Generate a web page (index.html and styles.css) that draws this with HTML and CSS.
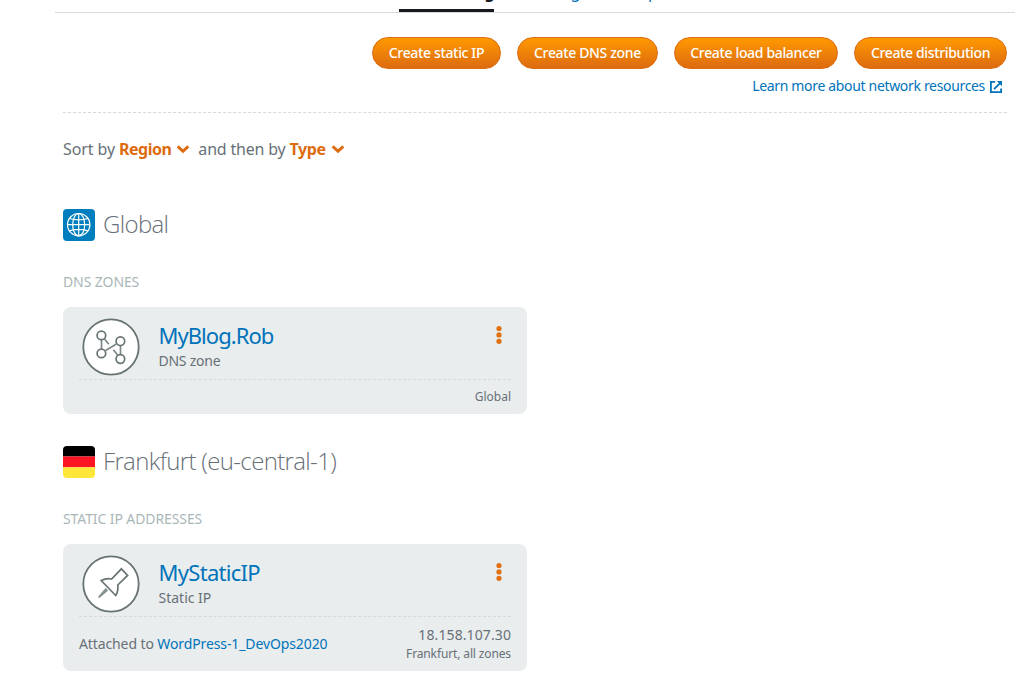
FILE: index.html
```html
<!DOCTYPE html>
<html lang="en">
<head>
<meta charset="utf-8">
<title>Networking</title>
<link rel="stylesheet" href="styles.css">
</head>
<body>
<div class="page">
  <nav class="tabs">
    <a class="tab tab-active"><span class="t-networking">Networking</span></a>
    <a class="tab"><span class="t-storage">Storage</span></a>
    <a class="tab tab-snapshots"><span class="t-snapshots">Snapshots</span></a>
  </nav>
  <main class="content">
    <header class="actions">
      <div class="buttons">
        <button class="btn b-ip">Create static IP</button>
        <button class="btn b-dns">Create DNS zone</button>
        <button class="btn b-lb">Create load balancer</button>
        <button class="btn b-dist">Create distribution</button>
      </div>
      <a class="learn"><span class="t-learn">Learn more about network resources</span>
        <svg width="14" height="14" viewBox="0 0 14 14" fill="none" stroke="currentColor" stroke-width="1.8"><path d="M6 1.9H1.9V12.1H12.1V8.5M5 9.2L11.4 2.8"/><path d="M7.8 1H13V6.2Z" fill="currentColor" stroke="none"/></svg>
      </a>
    </header>
    <div class="sort">
      <span class="t-sort">Sort by</span>
      <b class="t-region">Region</b>
      <svg class="chev chev-region" width="14" height="10" viewBox="0 0 14 10"><path d="M1.7 2.3L7 7.3L12.3 2.3"/></svg>
      <span class="t-then">and then by</span>
      <b class="t-type">Type</b>
      <svg class="chev" width="14" height="10" viewBox="0 0 14 10"><path d="M1.7 2.3L7 7.3L12.3 2.3"/></svg>
    </div>

    <section class="region">
      <div class="region-title">
        <svg width="32" height="32" viewBox="0 0 32 32" fill="none" stroke="#fff" stroke-width="1.2"><rect width="32" height="32" rx="4" fill="#007dbc" stroke="none"/><circle cx="15.7" cy="15.7" r="11.2"/><ellipse cx="15.7" cy="15.7" rx="6" ry="11.2"/><path d="M15.7 4.5V27M4.5 15.7H27M6.5 9.5Q15.7 12.4 24.9 9.5M6.5 21.9Q15.7 19 24.9 21.9"/></svg>
        <h2 class="t-global">Global</h2>
      </div>
      <h3 class="t-zones">DNS ZONES</h3>
      <article class="card">
        <div class="card-head">
          <svg class="badge" width="58" height="58" viewBox="0 0 58 58" fill="none" stroke="#687373" stroke-width="1.7"><circle cx="29" cy="29" r="27.7" fill="#fff" stroke-width="1.8"/><path d="M19.5 22V31M38.5 27.5V36.5M23.6 32.6L34.4 26M22.5 21L26.8 26.2M31.3 31.8L35.6 37" stroke="#7d8787"/><circle cx="19.4" cy="17.4" r="4.3"/><circle cx="19.4" cy="35.4" r="4.3"/><circle cx="38.4" cy="23.2" r="4.3"/><circle cx="38.4" cy="41" r="4.3"/></svg>
          <div class="card-name"><a class="name t-blog">MyBlog.Rob</a><span class="kind t-kind-dns">DNS zone</span></div>
          <svg class="dots" width="6" height="20" viewBox="0 0 6 20" fill="#e17012"><circle cx="3" cy="3.5" r="2.6"/><circle cx="3" cy="9.9" r="2.6"/><circle cx="3" cy="16.3" r="2.6"/></svg>
        </div>
        <div class="card-foot"><span class="where t-where-global">Global</span></div>
      </article>
    </section>

    <section class="region">
      <div class="region-title">
        <svg class="flag" width="32" height="32" viewBox="0 0 32 32"><path fill="#000" d="M0 0H32V10.5H0Z"/><path fill="#ff1423" d="M0 10.5H32V21.3H0Z"/><path fill="#ffe63b" d="M0 21.3H32V32H0Z"/></svg>
        <h2 class="t-frankfurt">Frankfurt (eu-central-1)</h2>
      </div>
      <h3 class="t-addresses">STATIC IP ADDRESSES</h3>
      <article class="card card-tall">
        <div class="card-head">
          <svg class="badge" width="58" height="58" viewBox="0 0 58 58" fill="none" stroke="#687373" stroke-width="1.7"><circle cx="29" cy="29" r="27.7" fill="#fff" stroke-width="1.8"/><path d="M39.4 13.8L45.6 20.4L35.8 30Q36.5 36 33.7 40.5L19.2 25.5Q24.5 22.8 29.6 24Z"/><path d="M23.7 33.3L25.8 35.4L18.3 42L16.5 42.6L17.2 40.8Z" fill="#879191" stroke="#879191" stroke-width=".7"/></svg>
          <div class="card-name"><a class="name t-static">MyStaticIP</a><span class="kind t-kind-ip">Static IP</span></div>
          <svg class="dots" width="6" height="20" viewBox="0 0 6 20" fill="#e17012"><circle cx="3" cy="3.5" r="2.6"/><circle cx="3" cy="9.9" r="2.6"/><circle cx="3" cy="16.3" r="2.6"/></svg>
        </div>
        <div class="card-foot">
          <div class="attached"><span class="t-attached">Attached to</span> <a class="t-wordpress">WordPress-1_DevOps2020</a></div>
          <div class="address"><span class="ip t-ip">18.158.107.30</span><span class="where t-where-zones">Frankfurt, all zones</span></div>
        </div>
      </article>
    </section>
  </main>
</div>
</body>
</html>
```
FILE: styles.css
```css
* { box-sizing: border-box; }
body { margin: 0; height: 688px; overflow: hidden; background: #fff; color: #687078; font: 14px/20px "Noto Sans", sans-serif; }
h2, h3 { margin: 0; }
span, a, b, h2, h3 { white-space: nowrap; }
.page { margin: 0 15px 0 55px; }
.tabs { display: flex; gap: 37px; height: 13px; padding-left: 344px; align-items: flex-end; border-bottom: 1px solid #d5dbdb; }
.tab { height: 31px; padding-bottom: 6px; font-size: 16px; line-height: 22px; color: #0073bb; border-bottom: 3px solid transparent; }
.tab-active { width: 95px; color: #16191f; font-weight: 700; border-color: #16191f; }
.tab-snapshots { margin-left: -6px; }
.content { padding: 24px 8px 0; }
.actions { height: 76px; border-bottom: 1px dashed #d5dbdb; }
.buttons { display: flex; gap: 16px; justify-content: flex-end; }
.btn { height: 32px; padding: 0; border: 1px solid #dd6b10; border-radius: 16px; background: linear-gradient(#ff9900, #dd6b10); color: #fff; font: 500 14px/30px "Noto Sans", sans-serif; letter-spacing: -.35px; }
.b-ip { width: 129px; }
.b-dns { width: 141px; }
.b-lb { width: 164px; }
.b-dist { width: 153px; }
.learn { display: flex; justify-content: flex-end; align-items: center; gap: 4px; height: 20px; margin-top: 7px; padding-right: 4px; color: #0073bb; }
.t-learn { letter-spacing: -.33px; }
.learn svg { margin-top: 2px; }
.sort { display: flex; align-items: center; height: 24px; margin-top: 24px; font-size: 16px; }
.sort b { margin: 0 5px 0 4px; color: #dd6b10; letter-spacing: -.5px; }
.sort .t-type { letter-spacing: -.4px; }
.t-sort { letter-spacing: -.1px; }
.t-then { letter-spacing: -.2px; }
.chev { fill: none; stroke: #dd6b10; stroke-width: 3; }
.chev-region { margin-right: 8px; }
.region { margin-top: 32px; }
.sort + .region { margin-top: 48px; }
.region-title { display: flex; gap: 8px; height: 32px; }
.region-title h2 { height: 30px; font: 300 24px/30px "Open Sans", sans-serif; letter-spacing: -.65px; }
.flag { border-radius: 4px; }
.region h3 { margin-top: 31px; color: #aab7b8; font-size: 14px; font-weight: 400; line-height: 20px; letter-spacing: -.1px; }
.card { width: 464px; height: 107px; margin-top: 15px; padding: 0 16px; border-radius: 8px; background: #e9eded; }
.card-tall { height: 127px; }
.card-head { display: flex; height: 73px; padding: 11px 9px 0 3px; border-bottom: 1px dashed #d5dbdb; }
.badge { flex: none; }
.card-name { flex: 1; display: flex; flex-direction: column; align-items: flex-start; padding: 3px 0 0 18.5px; }
.name { font-size: 22px; line-height: 28px; color: #0073bb; }
.t-blog { letter-spacing: -.95px; }
.t-static { letter-spacing: -.7px; }
.kind { margin-top: 2px; line-height: 20px; }
.t-kind-dns { letter-spacing: -.25px; }
.dots { margin-top: 7px; }
.card-foot { display: flex; justify-content: flex-end; padding-top: 8px; }
.where { font-size: 12px; line-height: 18px; }
.card-tall .card-foot { justify-content: space-between; }
.attached { padding-top: 9px; letter-spacing: -.11px; }
.attached a { color: #0073bb; }
.address { display: flex; flex-direction: column; align-items: flex-end; }
.ip { line-height: 20px; letter-spacing: .1px; }
.t-where-zones { letter-spacing: -.13px; }
```
